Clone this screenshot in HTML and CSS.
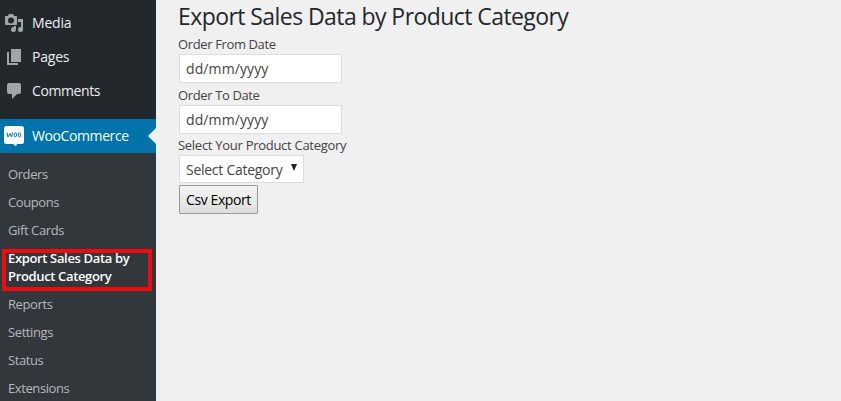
FILE: index.html
```html
<!DOCTYPE html>
<html lang="en">
<head>
<meta charset="utf-8">
<title>Export Sales Data by Product Category</title>
<link rel="stylesheet" href="styles.css">
</head>
<body>
<div class="admin">
  <nav class="sidebar">
    <a class="item"><svg class="icon" viewBox="0 0 20 20"><path fill-rule="evenodd" d="M13 11V4c0-.55-.45-1-1-1h-1.670L9 1H5L3.670 3H2c-.55 0-1 .45-1 1v7c0 .55.45 1 1 1h10c.55 0 1-.45 1-1zM7 4.500a3 3 0 1 1 0 6 3 3 0 0 1 0-6zM14 6h5v10.500a2.500 2.500 0 1 1-2-2.450V9h-3zM10 14.050V13h2v3.500a2.500 2.500 0 1 1-2-2.450z"/></svg><span class="short">Media</span></a>
    <a class="item"><svg class="icon" viewBox="0 0 20 20"><path d="M7 15V2h10v13zm-1 1h8v2H3V5h2v11z"/></svg><span class="short">Pages</span></a>
    <a class="item"><svg class="icon" viewBox="0 0 20 20"><path d="M5 2h10q2 0 2 2v7q0 2-2 2h-2l-5 5v-5H5q-2 0-2-2V4q0-2 2-2z"/></svg><span>Comments</span></a>
    <a class="item current"><svg class="icon" viewBox="0 0 20 20"><path d="M2.500 0h15Q20 0 20 2.500v13q0 2.500-2.500 2.500H13l-1 2.300L9 18H2.500Q0 18 0 15.500v-13Q0 0 2.500 0z"/><path class="woo" d="M3 6.500l1 4.500 2-3.500L7.500 11l1-4.500"/><ellipse class="woo" cx="11.300" cy="8.800" rx="1.300" ry="2"/><ellipse class="woo" cx="15.500" cy="8.800" rx="1.300" ry="2"/></svg><span>WooCommerce</span></a>
    <div class="submenu">
      <a>Orders</a>
      <a>Coupons</a>
      <a>Gift Cards</a>
      <a class="selected">Export Sales Data by<br>Product Category</a>
      <a>Reports</a>
      <a>Settings</a>
      <a>Status</a>
      <a>Extensions</a>
    </div>
  </nav>
  <main class="content">
    <h1>Export Sales Data by Product Category</h1>
    <div class="label">Order From Date</div>
    <div class="field">dd/mm/yyyy</div>
    <div class="label">Order To Date</div>
    <div class="field">dd/mm/yyyy</div>
    <div class="label category">Select Your Product Category</div>
    <div class="select"><span>Select Category</span><svg class="arrow" viewBox="0 0 6 7"><path d="M0 0h6L3 7z"/></svg></div>
    <button class="export" type="button">Csv Export</button>
  </main>
</div>
</body>
</html>
```
FILE: styles.css
```css
*, *::before, *::after { box-sizing: border-box; }
body { margin: 0; overflow: hidden; background: #f0f0f0; color: #444; font: 13px/18px "Open Sans", "Noto Sans", sans-serif; }
.admin { display: flex; height: 401px; white-space: nowrap; }
.sidebar { width: 156px; padding-top: 6px; background: #23282d; overflow: hidden; }
.item { display: flex; align-items: center; height: 34px; padding-left: 4px; gap: 8px; color: #eee; font-size: 14px; letter-spacing: -.4px; }
.item .short { letter-spacing: -.2px; }
.icon { width: 20px; height: 20px; fill: #a0a5aa; overflow: visible; }
.current { position: relative; margin-top: 11px; background: #0073aa; color: #fff; }
.current .icon { fill: #fff; }
.current .woo { fill: none; stroke: #0073aa; stroke-width: 1; }
.current::after { content: ""; position: absolute; right: 0; top: 9px; border: 8px solid transparent; border-left: 0; border-right-color: #f0f0f0; }
.submenu { height: 248px; padding-top: 7px; background: #32373c; }
.submenu a { display: block; padding: 5px 8px; color: #b4b9be; letter-spacing: -.4px; }
.submenu .selected { position: relative; color: #fff; font-weight: 600; letter-spacing: -.35px; }
.selected::after { content: ""; position: absolute; left: 2px; top: 5px; width: 150px; height: 42px; border: 4px solid #ec0b0e; }
.content { padding-left: 22px; }
h1 { margin: 0; height: 35px; font-size: 23px; line-height: 32px; font-weight: 400; color: #23282d; letter-spacing: -.57px; }
.label { height: 19px; line-height: 19px; letter-spacing: -.37px; }
.field { width: 163px; height: 29px; margin: 0 0 3px 1px; padding-left: 6px; border: 1px solid #ddd; background: #fff; font-size: 14px; line-height: 28px; letter-spacing: .1px; }
.category { height: 18px; line-height: 17px; letter-spacing: -.28px; }
.select { display: flex; align-items: center; width: 125px; height: 28px; margin: 0 0 2px 1px; padding: 1px 6px 0; border: 1px solid #ddd; background: #fff; font-size: 14px; letter-spacing: -.27px; justify-content: space-between; }
.arrow { width: 6px; height: 7px; margin-bottom: 4px; fill: #222; }
.export { display: block; width: 79px; height: 29px; margin-left: 1px; padding: 0; border: 1px solid #999; border-radius: 1px; background: linear-gradient(#f5f5f5, #ddd); color: #000; font: 14px/27px "Open Sans", "Noto Sans", sans-serif; letter-spacing: -.4px; }
```
